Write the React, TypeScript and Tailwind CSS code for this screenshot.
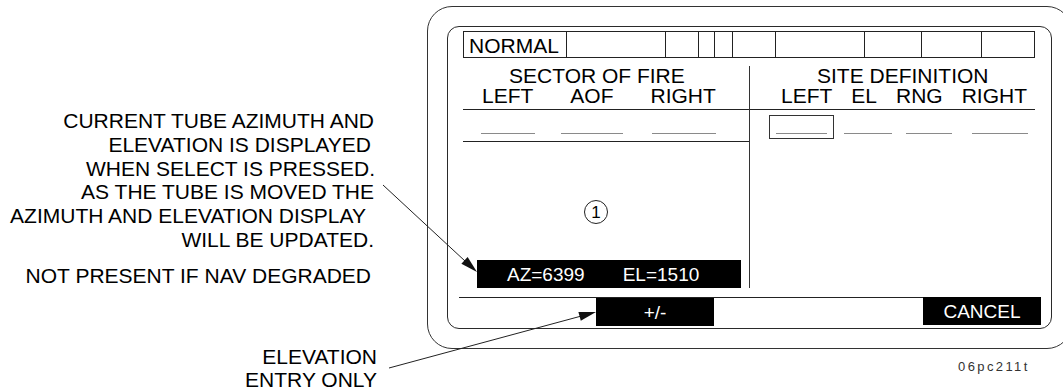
const statusCells = [102, 99, 33, 16, 18, 43, 89, 57, 60, 53];

const noteLines = [
  { text: 'CURRENT TUBE AZIMUTH AND', pr: 'pr-[1px]' },
  { text: 'ELEVATION IS DISPLAYED', pr: 'pr-[4px]' },
  { text: 'WHEN SELECT IS PRESSED.', pr: 'pr-0' },
  { text: 'AS THE TUBE IS MOVED THE', pr: 'pr-[1px]' },
  { text: 'AZIMUTH AND ELEVATION DISPLAY', pr: 'pr-[9px]' },
  { text: 'WILL BE UPDATED.', pr: 'pr-[1px]' },
];

function LeftNotes() {
  return (
    <div className="flex w-[427px] shrink-0 flex-col pt-[109px] text-[21px] leading-[23.8px]">
      <div className="flex w-[375px] flex-col items-end">
        {noteLines.map((l) => (
          <div key={l.text} className={`whitespace-nowrap ${l.pr}`}>
            {l.text}
          </div>
        ))}
        <div className="mt-[12px] whitespace-nowrap pr-[4px]">NOT PRESENT IF NAV DEGRADED</div>
      </div>
      <div className="mt-[57px] flex w-[377px] flex-col items-end">
        <div className="whitespace-nowrap">ELEVATION</div>
        <div className="whitespace-nowrap">ENTRY ONLY</div>
      </div>
    </div>
  );
}

function Blank({ w, ml }: { w: string; ml: string }) {
  return <div className={`h-[24px] border-b border-[#8a8a8a] ${w} ${ml}`} />;
}

function Screen() {
  return (
    <div className="flex h-full w-full flex-col rounded-[12px] border border-[#2a2a2a] pt-[4px]">
      {/* status bar */}
      <div className="ml-[15px] flex h-[27px] w-[572px] border border-[#222]">
        {statusCells.map((w, i) => (
          <div
            key={i}
            className={i === 0 ? 'pl-[5px] pt-[1px] text-[21px] leading-[25px]' : 'border-l border-[#222]'}
            style={{ width: w }}
          >
            {i === 0 ? 'NORMAL' : null}
          </div>
        ))}
      </div>

      <div className="ml-[15px] mt-[8px] flex text-[21px] leading-[20px]">
        {/* sector of fire */}
        <div className="flex h-[222px] w-[287px] flex-col border-r border-[#333]">
          <div className="h-[44px] border-b border-[#222] pt-0">
            <div className="pl-[46px] whitespace-nowrap">SECTOR OF FIRE</div>
            <div className="flex gap-[37px] pl-[19px] whitespace-nowrap">
              <span>LEFT</span>
              <span>AOF</span>
              <span>RIGHT</span>
            </div>
          </div>
          <div className="flex h-[32px] items-start border-b border-[#222]">
            <Blank w="w-[54px]" ml="ml-[18px]" />
            <Blank w="w-[62px]" ml="ml-[26px]" />
            <Blank w="w-[64px]" ml="ml-[29px]" />
          </div>
          <div className="ml-[121px] mt-[58px] flex h-[24px] w-[24px] items-center justify-center rounded-full border border-[#222] text-[17px] leading-none">
            1
          </div>
          <div className="ml-[14px] mt-[36px] flex h-[28px] w-[264px] items-center bg-black pl-[30px] text-[19px] leading-none text-white">
            <span>AZ=6399</span>
            <span className="ml-[38px]">EL=1510</span>
          </div>
        </div>

        {/* site definition */}
        <div className="flex w-[285px] flex-col">
          <div className="h-[44px] border-b border-[#222]">
            <div className="pl-[67px] whitespace-nowrap">SITE DEFINITION</div>
            <div className="flex gap-[19px] pl-[31px] whitespace-nowrap">
              <span>LEFT</span>
              <span>EL</span>
              <span>RNG</span>
              <span>RIGHT</span>
            </div>
          </div>
          <div className="flex items-start">
            <div className="ml-[19px] mt-[5px] h-[24px] w-[65px] border border-[#333]">
              <div className="ml-[6px] h-[18px] w-[51px] border-b border-[#8a8a8a]" />
            </div>
            <Blank w="w-[48px]" ml="ml-[10px]" />
            <Blank w="w-[46px]" ml="ml-[14px]" />
            <Blank w="w-[56px]" ml="ml-[20px]" />
          </div>
        </div>
      </div>

      {/* soft keys */}
      <div className="ml-[11px] mt-[9px] flex w-[582px] border-t border-[#222] text-[19px] leading-none text-white">
        <div className="ml-[137px] flex h-[28px] w-[118px] items-center justify-center bg-black">+/-</div>
        <div className="-mt-[1px] ml-auto flex h-[28px] w-[118px] items-center justify-center bg-black">CANCEL</div>
      </div>
    </div>
  );
}

function Leaders() {
  return (
    <svg className="pointer-events-none absolute inset-0" width={1063} height={391} viewBox="0 0 1063 391">
      <line x1={383} y1={185} x2={465} y2={261} stroke="#222" strokeWidth={1} />
      <polygon points="477,272 461.4,263.7 467.6,257.1" fill="#111" />
      <line x1={389} y1={368} x2={580} y2={316.4} stroke="#222" strokeWidth={1} />
      <polygon points="596,312 580.8,320.8 578.4,312.1" fill="#111" />
    </svg>
  );
}

export default function App() {
  return (
    <div className="relative h-[391px] w-[1063px] overflow-hidden bg-white font-['Liberation_Sans',Arial,sans-serif] text-black">
      <div className="flex">
        <LeftNotes />
        <div className="flex shrink-0 flex-col pt-[6px]">
          <div className="h-[343px] w-[645px] rounded-[25px] border border-[#333] p-[19px]">
            <Screen />
          </div>
          <div className="pl-[531px] pt-[10px] text-[13px] leading-[16px] tracking-[2.4px] text-[#333] whitespace-nowrap">
            06pc211t
          </div>
        </div>
      </div>
      <Leaders />
    </div>
  );
}
